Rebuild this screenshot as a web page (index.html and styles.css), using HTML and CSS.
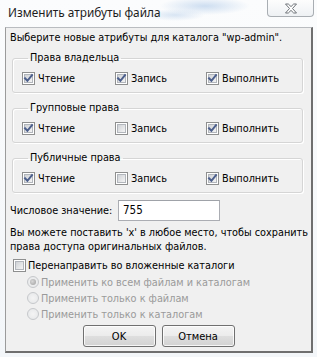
FILE: index.html
```html
<!DOCTYPE html>
<html lang="ru">
<head>
<meta charset="utf-8">
<title>Изменить атрибуты файла</title>
<link rel="stylesheet" href="styles.css">
</head>
<body>
<div class="window">
  <div class="titlebar">
    <div class="title">Изменить атрибуты файла</div>
    <div class="close">
      <svg width="14" height="11" viewBox="0 0 14 11"><path d="M1.5 1 L4.3 1 L7 3.6 L9.7 1 L12.5 1 L8.5 5.5 L12.5 10 L9.7 10 L7 7.4 L4.3 10 L1.5 10 L5.5 5.5 Z" fill="#fff" stroke="#6e7378" stroke-width="1" stroke-linejoin="round"/></svg>
    </div>
  </div>
  <div class="client">
    <div class="intro">Выберите новые атрибуты для каталога "wp-admin".</div>

    <fieldset class="group">
      <legend>Права владельца</legend>
      <div class="perms">
        <label class="opt"><span class="cb"><svg class="check" viewBox="0 0 11 11"><path d="M2 5.3 L4.4 7.8 L9 2.2"/></svg></span>Чтение</label>
        <label class="opt"><span class="cb"><svg class="check" viewBox="0 0 11 11"><path d="M2 5.3 L4.4 7.8 L9 2.2"/></svg></span>Запись</label>
        <label class="opt"><span class="cb"><svg class="check" viewBox="0 0 11 11"><path d="M2 5.3 L4.4 7.8 L9 2.2"/></svg></span>Выполнить</label>
      </div>
    </fieldset>

    <fieldset class="group">
      <legend>Групповые права</legend>
      <div class="perms">
        <label class="opt"><span class="cb"><svg class="check" viewBox="0 0 11 11"><path d="M2 5.3 L4.4 7.8 L9 2.2"/></svg></span>Чтение</label>
        <label class="opt"><span class="cb"></span>Запись</label>
        <label class="opt"><span class="cb"><svg class="check" viewBox="0 0 11 11"><path d="M2 5.3 L4.4 7.8 L9 2.2"/></svg></span>Выполнить</label>
      </div>
    </fieldset>

    <fieldset class="group">
      <legend>Публичные права</legend>
      <div class="perms">
        <label class="opt"><span class="cb"><svg class="check" viewBox="0 0 11 11"><path d="M2 5.3 L4.4 7.8 L9 2.2"/></svg></span>Чтение</label>
        <label class="opt"><span class="cb"></span>Запись</label>
        <label class="opt"><span class="cb"><svg class="check" viewBox="0 0 11 11"><path d="M2 5.3 L4.4 7.8 L9 2.2"/></svg></span>Выполнить</label>
      </div>
    </fieldset>

    <div class="numeric">
      <span class="num-label">Числовое значение:</span>
      <span class="input">755</span>
    </div>

    <p class="note">Вы можете поставить 'x' в любое место, чтобы сохранить права доступа оригинальных файлов.</p>

    <label class="opt recurse"><span class="cb"></span>Перенаправить во вложенные каталоги</label>

    <div class="radios">
      <div class="radio-row"><span class="rb on"></span>Применить ко всем файлам и каталогам</div>
      <div class="radio-row"><span class="rb"></span>Применить только к файлам</div>
      <div class="radio-row"><span class="rb"></span>Применить только к каталогам</div>
    </div>

    <div class="buttons">
      <button class="btn">OK</button>
      <button class="btn">Отмена</button>
    </div>
  </div>
</div>
</body>
</html>
```

FILE: styles.css
```css
html, body {
  margin: 0;
  padding: 0;
}
body {
  width: 317px;
  height: 357px;
  overflow: hidden;
  background: #f6f8fa;
  font-family: "DejaVu Sans Condensed", "DejaVu Sans", sans-serif;
  font-stretch: condensed;
  font-size: 10.8px;
  color: #000;
}
.window {
  height: 357px;
  display: flex;
  flex-direction: column;
  background:
    radial-gradient(ellipse 45px 9px at 205px 6px, rgba(150, 185, 225, 0.45), rgba(150, 185, 225, 0) 100%),
    radial-gradient(ellipse 30px 6px at 175px 15px, rgba(150, 185, 225, 0.35), rgba(150, 185, 225, 0) 100%),
    linear-gradient(#fbfcfd, #f3f6f9);
}
.titlebar {
  height: 27px;
  display: flex;
  justify-content: space-between;
  align-items: flex-start;
  flex: none;
}
.title {
  font-family: "Noto Sans", "Open Sans", sans-serif;
  font-stretch: normal;
  font-size: 11.8px;
  color: #1e1e1e;
  padding: 4px 0 0 8px;
  line-height: 16px;
}
.close {
  width: 45px;
  height: 16px;
  margin-right: 3px;
  border: 1px solid #a9aeb3;
  border-top: none;
  border-radius: 0 0 4px 4px;
  background: linear-gradient(#fdfdfd, #eef1f4);
  display: flex;
  align-items: center;
  justify-content: center;
}
.close svg {
  display: block;
}
.client {
  flex: 1;
  margin: 0 4px 4px 5px;
  border: 1px solid #9b9b9b;
  border-top-color: #b9bcc0;
  border-right: 2px solid #6f6f6f;
  border-bottom: 2px solid #6f6f6f;
  background: #f0f0f0;
  padding: 3px 4px 0 4px;
  display: flex;
  flex-direction: column;
}
.intro {
  line-height: 14px;
}
.group {
  margin: 6px 4px 0 2px;
  padding: 6px 0 6px 9px;
  border: 1px solid #d5d5d5;
  border-radius: 3px;
  box-shadow: inset 1px 1px 0 #fff, 1px 1px 0 #fff;
  min-width: 0;
}
.group + .group {
  margin-top: 8px;
}
.group legend {
  padding: 0 2px;
  margin-left: 6px;
  line-height: 14px;
}
.perms {
  display: grid;
  grid-template-columns: 93px 91px 1fr;
  height: 15px;
  align-items: center;
}
.opt {
  display: flex;
  align-items: center;
  gap: 3px;
  line-height: 15px;
}
.cb {
  width: 11px;
  height: 11px;
  border: 1px solid #8e8f8f;
  background: #fff;
  position: relative;
  flex: none;
  box-sizing: content-box;
}
.cb::before {
  content: "";
  position: absolute;
  left: 1px;
  top: 1px;
  width: 7px;
  height: 7px;
  border: 1px solid #b2b6bc;
  background: linear-gradient(135deg, #cfd2d6, #f4f4f4);
}
.check {
  position: absolute;
  left: 0;
  top: 0;
  width: 11px;
  height: 11px;
  z-index: 1;
}
.check path {
  fill: none;
  stroke: #4c5f8c;
  stroke-width: 2;
  stroke-linecap: square;
}
.numeric {
  margin-top: 7px;
  display: flex;
  align-items: center;
  height: 21px;
}
.num-label {
  width: 108px;
}
.input {
  width: 96px;
  height: 19px;
  border: 1px solid #abadb3;
  border-top-color: #9fa2a8;
  background: #fff;
  padding-left: 4px;
  line-height: 19px;
  font-size: 11.5px;
}
.note {
  margin: 5px -4px 0 0;
  line-height: 14px;
}
.recurse {
  margin: 4px 0 0 3px;
  height: 14px;
  gap: 2px;
}
.radios {
  margin: 2px 0 0 17px;
  display: flex;
  flex-direction: column;
}
.radio-row {
  height: 16px;
  display: flex;
  align-items: center;
  gap: 2px;
  color: #9a9a9a;
}
.rb {
  width: 10px;
  height: 10px;
  border: 1px solid #c6c8cb;
  border-radius: 50%;
  background: radial-gradient(circle at 50% 50%, #f4f4f4, #e4e6e8);
  position: relative;
  flex: none;
}
.rb.on::after {
  content: "";
  position: absolute;
  left: 2px;
  top: 2px;
  width: 6px;
  height: 6px;
  border-radius: 50%;
  background: radial-gradient(circle at 40% 40%, #d8d8d8, #9d9d9d);
}
.buttons {
  margin-top: 3px;
  display: flex;
  justify-content: center;
  gap: 6px;
}
.btn {
  width: 73px;
  height: 22px;
  border: 1px solid #707070;
  border-radius: 3px;
  background: linear-gradient(#f4f4f4 0%, #ececec 48%, #dedede 52%, #d2d2d2 100%);
  box-shadow: inset 0 0 0 1px rgba(255, 255, 255, 0.8);
  font-family: "DejaVu Sans Condensed", "DejaVu Sans", sans-serif;
  font-stretch: condensed;
  font-size: 11px;
  color: #000;
  padding: 0;
}
```
